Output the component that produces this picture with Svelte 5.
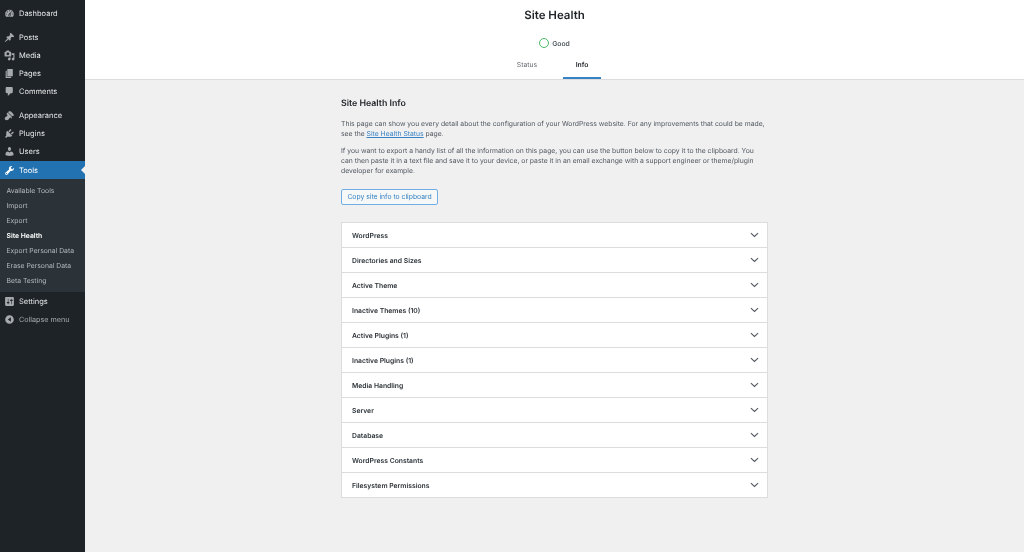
<script lang="ts">
	const sections = [
		'WordPress',
		'Directories and Sizes',
		'Active Theme',
		'Inactive Themes (10)',
		'Active Plugins (1)',
		'Inactive Plugins (1)',
		'Media Handling',
		'Server',
		'Database',
		'WordPress Constants',
		'Filesystem Permissions'
	];

	const submenu = [
		'Available Tools',
		'Import',
		'Export',
		'Site Health',
		'Export Personal Data',
		'Erase Personal Data',
		'Beta Testing'
	];

	const icons: Record<string, string> = {
		dashboard: 'M3.76 16h12.48c1.1-1.37 1.76-3.11 1.76-5 0-4.42-3.58-8-8-8s-8 3.58-8 8c0 1.89.66 3.63 1.76 5zM10 4c.55 0 1 .45 1 1s-.45 1-1 1-1-.45-1-1 .45-1 1-1zM6 6c.55 0 1 .45 1 1s-.45 1-1 1-1-.45-1-1 .45-1 1-1zm8 0c.55 0 1 .45 1 1s-.45 1-1 1-1-.45-1-1 .45-1 1-1zm-5.37 5.55L12 7v6c0 1.1-.9 2-2 2s-2-.9-2-2c0-.57.24-1.08.63-1.45zM4 10c.55 0 1 .45 1 1s-.45 1-1 1-1-.45-1-1 .45-1 1-1zm12 0c.55 0 1 .45 1 1s-.45 1-1 1-1-.45-1-1 .45-1 1-1zm-5 3c0-.55-.45-1-1-1s-1 .45-1 1 .45 1 1 1 1-.45 1-1z',
		posts: 'M10.44 3.02l1.82-1.82 6.36 6.35-1.83 1.82c-1.05-.68-2.48-.57-3.41.36l-.75.75c-.92.93-1.04 2.35-.35 3.4l-1.83 1.82-2.41-2.41-2.8 2.79c-.42.42-3.38 2.71-3.8 2.29s1.86-3.39 2.28-3.81l2.79-2.79L4.1 9.36l1.83-1.82c1.05.69 2.48.57 3.4-.36l.75-.75c.93-.92 1.05-2.35.36-3.41z',
		media: 'M13 11V4c0-.55-.45-1-1-1h-1.67L9 1H5L3.67 3H2c-.55 0-1 .45-1 1v7c0 .55.45 1 1 1h10c.55 0 1-.45 1-1zM7 4.5c1.38 0 2.5 1.12 2.5 2.5S8.38 9.5 7 9.5 4.5 8.38 4.5 7 5.62 4.5 7 4.5zM14 6h5v10.5c0 1.38-1.12 2.5-2.5 2.5S14 17.88 14 16.5s1.12-2.5 2.5-2.5c.17 0 .34.02.5.05V9h-3V6zm-4 8.05V13h2v3.5c0 1.38-1.12 2.5-2.5 2.5S7 17.88 7 16.5 8.12 14 9.5 14c.17 0 .34.02.5.05z',
		pages: 'M6 15V2h10v13H6zm-1 1h8v2H3V5h2v11z',
		comments: 'M5 2h9c1.1 0 2 .9 2 2v7c0 1.1-.9 2-2 2h-2l-5 5v-5H5c-1.1 0-2-.9-2-2V4c0-1.1.9-2 2-2z',
		appearance: 'M14.48 11.06L7.41 3.99l1.5-1.5c.5-.56 2.3-.47 3.51.32 1.21.8 1.43 1.28 2.41 2.28.98.98 1.48 1.21 2.27 2.41.79 1.21.88 3.01.32 3.51zm-.7.71L6.7 4.7 4.93 6.47c-.39.39-.39 1.02 0 1.41l1.06 1.06c.39.39.39 1.03 0 1.42-.6.6-1.43 1.11-2.21 1.69-.35.26-.7.53-1.01.84C1.43 13.23.7 16.31 2.17 17.83c1.52 1.47 4.6.74 5.95-.61.31-.31.58-.66.84-1.01.58-.78 1.09-1.61 1.69-2.21.39-.39 1.03-.39 1.42 0l1.06 1.06c.39.39 1.02.39 1.41 0z',
		plugins: 'M13.11 4.36L9.87 7.6 8 5.73l3.24-3.24c.35-.34 1.05-.2 1.56.32.52.51.66 1.21.31 1.55zm-8 1.77l.91-1.12 9.01 9.01-1.19.84c-.71.71-2.63 1.16-3.82 1.16H6.14L4.9 17.26c-.59.59-1.54.59-2.12 0-.59-.58-.59-1.53 0-2.12l1.24-1.24v-3.88c0-1.13.4-3.19 1.09-3.89zm7.26 3.97l3.24-3.24c.34-.35 1.04-.21 1.55.31.52.51.66 1.21.31 1.55l-3.24 3.25z',
		users: 'M10 9.25c-2.27 0-2.73-3.44-2.73-3.44C7 4.02 7.82 2 9.97 2c2.16 0 2.98 2.02 2.71 3.81 0 0-.41 3.44-2.68 3.44zm0 2.57L12.72 10c2.39 0 4.52 2.33 4.52 4.53v2.49s-3.65 1.13-7.24 1.13c-3.65 0-7.24-1.13-7.24-1.13v-2.49c0-2.25 1.94-4.53 4.43-4.53z',
		tools: 'M16.68 9.77c-1.34 1.34-3.3 1.67-4.95.99l-5.41 6.52c-.99.99-2.59.99-3.57 0-.99-.98-.99-2.58 0-3.57l6.52-5.42c-.68-1.65-.35-3.61.99-4.95 1.28-1.28 3.12-1.62 4.72-1.06l-2.89 2.89 2.82 2.82 2.86-2.87c.53 1.58.18 3.4-1.09 4.67zM3.81 16.21c.4.39 1.03.39 1.42 0 .4-.4.4-1.03 0-1.42-.39-.39-1.02-.39-1.42 0-.39.39-.39 1.03 0 1.42z',
		settings: 'M18 16V4c0-1.1-.9-2-2-2H4c-1.1 0-2 .9-2 2v12c0 1.1.9 2 2 2h12c1.1 0 2-.9 2-2zM8 11h1c.55 0 1 .45 1 1s-.45 1-1 1H8v1.5c0 .28-.22.5-.5.5s-.5-.22-.5-.5V13H6c-.55 0-1-.45-1-1s.45-1 1-1h1V5.5c0-.28.22-.5.5-.5s.5.22.5.5V11zm5-2h-1c-.55 0-1-.45-1-1s.45-1 1-1h1V5.5c0-.28.22-.5.5-.5s.5.22.5.5V7h1c.55 0 1 .45 1 1s-.45 1-1 1h-1v5.5c0 .28-.22.5-.5.5s-.5-.22-.5-.5V9z',
		collapse: 'M10 2.16c4.33 0 7.84 3.51 7.84 7.84s-3.51 7.84-7.84 7.84S2.16 14.33 2.16 10 5.67 2.16 10 2.16zM12.5 6v8L7 10z'
	};
</script>

{#snippet icon(name: string)}
	<svg class="icon" viewBox="0 0 20 20" aria-hidden="true"><path d={icons[name]} fill-rule="evenodd" /></svg>
{/snippet}

<div class="page">
	<aside class="sidebar">
		<nav>
			<div class="item">{@render icon('dashboard')}Dashboard</div>
			<div class="sep"></div>
			<div class="item">{@render icon('posts')}Posts</div>
			<div class="item">{@render icon('media')}Media</div>
			<div class="item">{@render icon('pages')}Pages</div>
			<div class="item">{@render icon('comments')}Comments</div>
			<div class="sep"></div>
			<div class="item">{@render icon('appearance')}Appearance</div>
			<div class="item">{@render icon('plugins')}Plugins</div>
			<div class="item">{@render icon('users')}Users</div>
			<div class="item current">{@render icon('tools')}Tools</div>
			<ul class="submenu">
				{#each submenu as entry (entry)}
					<li class:active={entry === 'Site Health'}>{entry}</li>
				{/each}
			</ul>
			<div class="item">{@render icon('settings')}Settings</div>
			<div class="item collapse">{@render icon('collapse')}Collapse menu</div>
		</nav>
	</aside>

	<main class="main">
		<header class="header">
			<h1>Site Health</h1>
			<div class="rating"><span class="ring"></span>Good</div>
			<div class="tabs">
				<span class="tab">Status</span>
				<span class="tab selected">Info</span>
			</div>
		</header>

		<section class="body">
			<h2>Site Health Info</h2>
			<p>This page can show you every detail about the configuration of your WordPress website. For any improvements that could be made, see the <a href="#status">Site Health Status</a> page.</p>
			<p>If you want to export a handy list of all the information on this page, you can use the button below to copy it to the clipboard. You can then paste it in a text file and save it to your device, or paste it in an email exchange with a support engineer or theme/plugin developer for example.</p>
			<button class="copy">Copy site info to clipboard</button>

			<div class="accordion">
				{#each sections as title (title)}
					<div class="row">
						<span>{title}</span>
						<svg class="chevron" viewBox="0 0 10 6" aria-hidden="true"><path d="M1 1l4 3.6L9 1" /></svg>
					</div>
				{/each}
			</div>
		</section>
	</main>
</div>

<style>
	:global(body) {
		margin: 0;
		background: #f0f0f1;
		font-family: Inter, "Liberation Sans", sans-serif;
		color: #1d2327;
		text-rendering: geometricPrecision;
	}

	.page {
		display: flex;
		height: 552px;
		overflow: hidden;
		will-change: transform;
	}

	.sidebar {
		width: 85px;
		flex-shrink: 0;
		background: #1d2327;
		padding-top: 4px;
		box-sizing: border-box;
	}

	.item {
		display: flex;
		align-items: center;
		height: 18px;
		font-size: 7.5px;
		color: #e4e5e6;
		padding-left: 4px;
		position: relative;
	}

	.sep {
		height: 6px;
	}

	.icon {
		width: 11px;
		height: 11px;
		margin-right: 4px;
		fill: #a7aaad;
		flex-shrink: 0;
	}

	.current {
		background: #2271b1;
		color: #fff;
		margin-top: 1px;
	}

	.current .icon {
		fill: #fff;
	}

	.current::after {
		content: '';
		position: absolute;
		right: 0;
		top: 5px;
		border: 4px solid transparent;
		border-right-color: #f0f0f1;
		border-left-width: 0;
	}

	.submenu {
		list-style: none;
		margin: 0;
		padding: 4px 0;
		background: #2c3338;
	}

	.submenu li {
		height: 15px;
		line-height: 15px;
		font-size: 6.8px;
		padding-left: 6.5px;
		color: #b4b9be;
	}

	.submenu .active {
		color: #fff;
		font-weight: 600;
	}

	.collapse {
		color: #a7aaad;
		font-size: 7.2px;
	}

	.main {
		flex: 1;
		min-width: 0;
	}

	.header {
		background: #fff;
		height: 79px;
		border-bottom: 1px solid #dcdcde;
		display: flex;
		flex-direction: column;
		align-items: center;
	}

	h1 {
		margin: 8px 0 0;
		font-size: 11.5px;
		line-height: 15px;
		font-weight: 600;
	}

	.rating {
		display: flex;
		align-items: center;
		gap: 3px;
		margin-top: 13px;
		height: 14px;
		font-size: 6.8px;
		font-weight: 600;
		color: #50575e;
	}

	.ring {
		width: 8px;
		height: 8px;
		border: 1px solid #4ab866;
		border-radius: 50%;
	}

	.tabs {
		display: flex;
		margin-top: auto;
		margin-right: 17px;
	}

	.tab {
		width: 72px;
		height: 27px;
		line-height: 25px;
		box-sizing: border-box;
		text-align: center;
		font-size: 6.8px;
		color: #646970;
	}

	.tab.selected {
		width: 38px;
		color: #1d2327;
		font-weight: 600;
		border-bottom: 2px solid #3582c4;
	}

	.body {
		width: 427px;
		margin-left: 256px;
		padding-top: 18px;
	}

	h2 {
		margin: 0 0 9px;
		font-size: 8.8px;
		line-height: 12px;
		font-weight: 600;
	}

	p {
		margin: 0 0 6.5px;
		max-width: 425px;
		font-size: 6.8px;
		line-height: 10.2px;
		color: #50575e;
	}

	a {
		color: #3582c4;
	}

	.copy {
		display: block;
		margin-top: 12px;
		width: 97px;
		height: 16px;
		padding: 0;
		background: #f6f7f7;
		border: 1px solid #72aee6;
		border-radius: 2px;
		color: #3582c4;
		font-family: inherit;
		font-size: 6.8px;
	}

	.accordion {
		margin-top: 17px;
		background: #fff;
		border: 1px solid #dcdcde;
	}

	.row {
		display: flex;
		align-items: center;
		justify-content: space-between;
		height: 23px;
		padding: 1px 8px 0 10px;
		font-size: 6.8px;
		font-weight: 600;
		color: #2c3338;
		border-bottom: 1px solid #dcdcde;
	}

	.row:last-child {
		border-bottom: 0;
	}

	.chevron {
		width: 9px;
		height: 6px;
		fill: none;
		stroke: #50575e;
		stroke-width: 1.2;
	}
</style>
